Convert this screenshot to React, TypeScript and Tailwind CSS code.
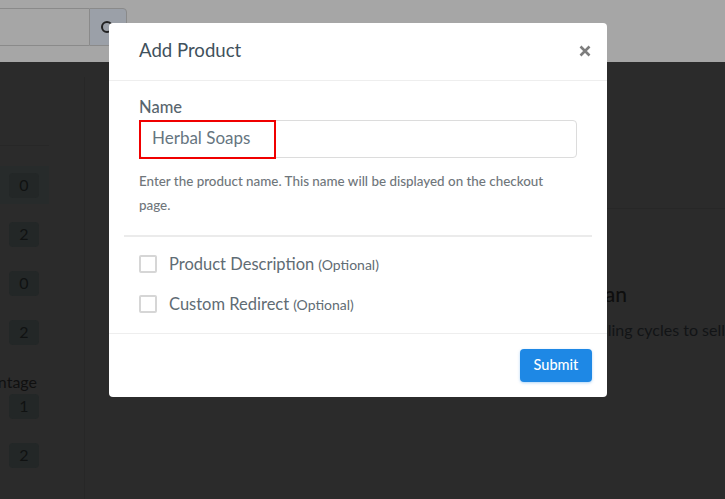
const sidebarRows = [
  { value: "0", active: true },
  { value: "2" },
  { value: "0" },
  { value: "2" },
  { value: "1", label: "Percentage" },
  { value: "2" },
];

function Badge({ value }: { value: string }) {
  return (
    <span className="flex h-[25px] w-[30px] items-center justify-center rounded-[4px] bg-[#232727] text-[16px] text-[#101212]">
      {value}
    </span>
  );
}

function Sidebar() {
  return (
    <aside className="w-[85px] shrink-0 pt-[15px]">
      <div className="h-[422px] border-r border-[#272727] pt-[68px]">
        <div className="h-px w-[49px] bg-[#272727]" />
        <div className="mt-[20px] flex w-[49px] flex-col">
          {sidebarRows.map((row) => (
            <div key={row.value + (row.label ?? "") + (row.active ? "a" : "")}>
              {row.label && (
                <div className="mt-[6px] flex h-[28px] w-[37px] items-center justify-end overflow-hidden whitespace-nowrap text-[16px] text-[#101010]">
                  {row.label}
                </div>
              )}
              <div
                className={
                  "flex h-[38px] items-center pl-[9px] " +
                  (row.active ? "bg-[#272b2b] " : "") +
                  (row.label ? "mt-[-9px] mb-[11px]" : "mb-[11px]")
                }
              >
                <Badge value={row.value} />
              </div>
            </div>
          ))}
        </div>
      </div>
    </aside>
  );
}

function Option({ title }: { title: string }) {
  return (
    <label className="flex h-[40px] items-center">
      <span className="h-[18px] w-[18px] rounded-[2px] border-2 border-[#d6d6d6] bg-white" />
      <span className="ml-[12px] flex items-baseline text-[16.5px] text-[#5f6c74]">
        {title}
        <span className="ml-[4px] text-[14px]">(Optional)</span>
      </span>
    </label>
  );
}

export default function App() {
  return (
    <div className="relative h-[499px] w-[725px] overflow-hidden bg-[#2b2b2b] font-['Lato',sans-serif]">
      <header className="flex h-[62px] items-start bg-[#a6a6a6] pt-[8px]">
        <div className="h-[38px] w-[89px] border-y border-[#8a8a8a]" />
        <button className="flex h-[38px] w-[38px] items-center rounded-r-[4px] border border-[#8a8a8a] bg-[#9ba0a8] pl-[11px]">
          <span className="h-[12px] w-[12px] rounded-full border-2 border-[#222]" />
        </button>
      </header>

      <div className="flex h-[437px]">
        <Sidebar />
        <main className="min-w-0 flex-1 overflow-hidden">
          <div className="ml-[300px] mt-[146px] h-px bg-[#272727]" />
          <h2 className="mt-[73px] whitespace-nowrap pr-[98px] text-right text-[21px] font-medium leading-[24px] text-[#0e0e0e]">
            Add a Plan
          </h2>
          <p className="mt-[13px] whitespace-nowrap text-right text-[16px] leading-[22px] text-[#121416]">
            Recurring billing cycles to sell
          </p>
        </main>
      </div>

      <div className="absolute left-[109px] top-[23px] flex h-[374px] w-[498px] flex-col rounded-[4px] bg-white">
        <div className="flex h-[58px] items-center justify-between border-b border-[#eeeeee] pb-[2px] pl-[30px] pr-[16px]">
          <h1 className="text-[18.6px] leading-none text-[#3f515c]">Add Product</h1>
          <svg viewBox="0 0 12 12" className="h-[12px] w-[12px]" aria-label="Close">
            <path d="M1.5 1.5 10.5 10.5M10.5 1.5 1.5 10.5" stroke="#7d7d7d" strokeWidth="2.6" fill="none" />
          </svg>
        </div>

        <div className="flex flex-1 flex-col px-[15px]">
          <div className="h-[156px] border-b-2 border-[#ebebeb] px-[15px] pt-[16px]">
            <label className="block text-[16.5px] font-medium leading-[20px] text-[#58656d]">Name</label>
            <div className="relative mt-[3px] flex h-[38px] w-[438px] items-center rounded-[4px] border border-[#dcdcdc] pb-[2px] pl-[12px] text-[17px] text-[#66757f]">
              Herbal Soaps
              <span className="absolute left-[-1px] top-[-1px] h-[39px] w-[137px] border-2 border-[#f00000]" />
            </div>
            <p className="mt-[11px] w-[420px] text-[13.4px] font-medium leading-[24px] text-[#6f767b]">
              Enter the product name. This name will be displayed on the checkout page.
            </p>
          </div>
          <div className="px-[15px] pt-[7px]">
            <Option title="Product Description" />
            <Option title="Custom Redirect" />
          </div>
        </div>

        <div className="flex h-[64px] items-center justify-end border-t border-[#eeeeee] pr-[15px]">
          <button className="h-[33px] w-[72px] rounded-[4px] bg-[#1e88e5] pb-[1px] text-[14.5px] font-medium text-white shadow-[0_1px_3px_rgba(30,136,229,0.35)]">
            Submit
          </button>
        </div>
      </div>
    </div>
  );
}
